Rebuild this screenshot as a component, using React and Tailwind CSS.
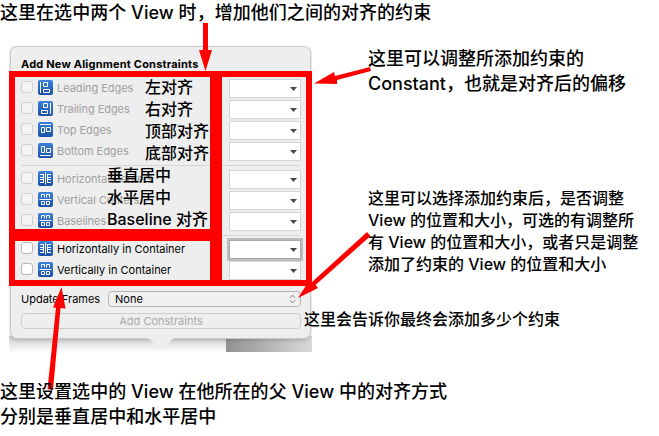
const GLYPHS = {
  leading: <path d="M2.5 2v11M5.5 2.500h4v4h-4zM5.5 9.5h6v3h-6z" />,
  trailing: <path d="M12.5 2v11M5.500 2.500h4v4h-4zM3.500 9.5h6v3h-6z" />,
  top: <path d="M2 2.5h11M3.5 5.5h3v5h-3zM8.500 5.5h4v4h-4z" />,
  bottom: <path d="M2 12.5h11M3.5 3.5h3v6h-3zM8.500 5.500h4v4h-4z" />,
  horizontal: <path d="M7.5 1.5v12M2 3.5h3.5v3H2M2 8.500h3.5v3H2M5.500 3v9M13 3.5H9.500v3H13M13 8.500H9.500v3H13M9.500 3v9" />,
  vertical: <path d="M1.5 7.5h12M3.5 5.5v-3h3v3M8.5 5.5v-3h3v3M3.5 9.5v3h3v-3zM8.5 9.5v3h3v-3z" />,
};

const GROUPS = [
  [
    ["leading", "Leading Edges"],
    ["trailing", "Trailing Edges"],
    ["top", "Top Edges"],
    ["bottom", "Bottom Edges"],
  ],
  [
    ["horizontal", "Horizontal Centers"],
    ["vertical", "Vertical Centers"],
    ["vertical", "Baselines"],
  ],
  [
    ["horizontal", "Horizontally in Container"],
    ["vertical", "Vertically in Container"],
  ],
];

function Row({ icon, label, enabled, focused }) {
  return (
    <div className="flex h-[21px] items-center">
      <span className={`mb-[3px] size-3 shrink-0 rounded-[3px] border ${enabled ? "border-[#b8b8b8] bg-white" : "border-[#cfcfcf] bg-[#f4f4f4]"}`} />
      <svg className="mb-0.5 ml-[5px] size-[15px] shrink-0 rounded-[2px] bg-linear-to-b from-[#3b82dc] to-[#1b4fa5]" viewBox="0 0 15 15" fill="none" stroke="white" strokeWidth="1">
        {GLYPHS[icon]}
      </svg>
      <span className={`ml-1 w-[172px] shrink-0 whitespace-nowrap text-[11px] leading-[21px] ${enabled ? "text-black" : "tracking-[-0.05px] text-[#a0a0a0]"}`}>{label}</span>
      <span className={`flex h-[19px] w-[72px] shrink-0 items-center justify-end border bg-white pr-[3px] ${focused ? "relative z-10 border-[#aaa] ring-2 ring-[#bdbdbd]" : "border-[#d5d5d5]"}`}>
        <svg className="h-1 w-[7px]" viewBox="0 0 7 4" fill="#4a4a4a"><path d="M0 0h7L3.5 4z" /></svg>
      </span>
    </div>
  );
}

function Panel() {
  return (
    <div className="relative ml-[9px] h-[306px] w-[303px] shrink-0 overflow-hidden bg-white">
      <div className="absolute bottom-0 left-0 h-4 w-[217px] bg-linear-to-b from-[#d0d0d0] to-[#fcfcfc]" />
      <div className="absolute bottom-0 right-0 h-4 w-[86px] bg-linear-to-r from-[#929292] to-[#dadada]" />
      <div className="relative mx-px h-[293px] rounded-[7px] border border-[#c8c8c8] bg-[#eee] px-[10px] shadow-[0_1px_4px_#0003]">
        <h1 className="h-[31px] whitespace-nowrap pt-[9px] text-[11px] font-bold leading-4 tracking-[0.2px] text-black">Add New Alignment Constraints</h1>
        {GROUPS.map((rows, g) => (
          <section key={g} className={g ? "mt-[3px] border-t border-[#d5d5d5] pt-[3px]" : ""}>
            {rows.map(([icon, label], i) => (
              <Row key={label} icon={icon} label={label} enabled={g === 2} focused={g === 2 && i === 0} />
            ))}
          </section>
        ))}
        <div className="mt-[10px] flex h-4 items-center">
          <span className="w-[87px] shrink-0 whitespace-nowrap text-[11px] text-black">Update Frames</span>
          <span className="flex h-4 w-[193px] shrink-0 items-center justify-between rounded-[4px] border border-[#b4b4b4] bg-[#f0f0f0] pl-1.5 pr-1 text-[11px] text-black">
            None
            <svg className="h-2.5 w-[7px]" viewBox="0 0 7 10" fill="none" stroke="#8c8c8c"><path d="M1 3.8 3.5 1 6 3.8M1 6.2 3.5 9 6 6.2" /></svg>
          </span>
        </div>
        <div className="mt-[6px] flex h-4 w-[280px] items-center justify-center rounded-[4px] border border-[#cdcdcd] text-[11px] text-[#aaa]">Add Constraints</div>
      </div>
      <svg className="absolute left-[138px] top-[292px] h-[13px] w-[28px]" viewBox="0 0 28 13"><path d="M0 0h28c-6 1-9 12-14 12S6 1 0 0z" fill="#eee" /></svg>
    </div>
  );
}

function Note({ className, lines }) {
  return (
    <div className={`z-10 whitespace-nowrap font-medium text-black ${className}`}>
      {lines.map((line) => <div key={line}>{line}</div>)}
    </div>
  );
}

function Highlights() {
  return (
    <>
      <div className="absolute left-[9px] top-[71px] h-[164px] w-[207px] border-6 border-[#f00]" />
      <div className="absolute left-[9px] top-[235px] h-[51px] w-[207px] border-6 border-[#f00]" />
      <div className="absolute left-[216px] top-[71px] h-[215px] w-[96px] border-6 border-[#f00]" />
      <svg className="absolute inset-0" width="659" height="436" viewBox="0 0 659 436" fill="#f00">
        <path d="M203 23h5v27h4l-6.500 21L199 50h4z" />
        <path d="M370 67l1 4-34 9v4l-23-.5 20-11.500 1 4z" />
        <path d="M367 232l3.500 4-55 49 2.500 3-20 10 11.500-18 2.500 2z" />
        <path d="M47.500 389l5.500 1 7.500-82 5 .5L61.500 287 53 307.500l3 .3z" />
      </svg>
    </>
  );
}

export default function App() {
  return (
    <main className="relative flex h-[436px] w-[659px] flex-col overflow-hidden bg-white font-['Inter','Noto_Sans_CJK_SC',sans-serif]">
      <Note className="mb-5 text-[18px] leading-[26px] tracking-[0.04px]" lines={["这里在选中两个 View 时，增加他们之间的对齐的约束"]} />
      <div className="flex">
        <Panel />
        <div className="flex flex-col pl-14">
          <Note className="text-[18px] leading-[25px]" lines={["这里可以调整所添加约束的", "Constant，也就是对齐后的偏移"]} />
          <Note className="mt-[91px] text-[16px] leading-[22px]" lines={["这里可以选择添加约束后，是否调整", "View 的位置和大小，可选的有调整所", "有 View 的位置和大小，或者只是调整", "添加了约束的 View 的位置和大小"]} />
          <Note className="-ml-16 mt-[33px] text-[16px] leading-[22px]" lines={["这里会告诉你最终会添加多少个约束"]} />
        </div>
      </div>
      <Note className="mt-[27px] text-[18px] leading-[25px] tracking-[0.03px]" lines={["这里设置选中的 View 在他所在的父 View 中的对齐方式", "分别是垂直居中和水平居中"]} />
      <Highlights />
      <Note className="absolute left-[145px] top-[76px] text-[16px] leading-[22px]" lines={["左对齐", "右对齐", "顶部对齐", "底部对齐"]} />
      <Note className="absolute left-[107px] top-[164px] text-[16px] leading-[22px]" lines={["垂直居中", "水平居中", "Baseline 对齐"]} />
    </main>
  );
}
